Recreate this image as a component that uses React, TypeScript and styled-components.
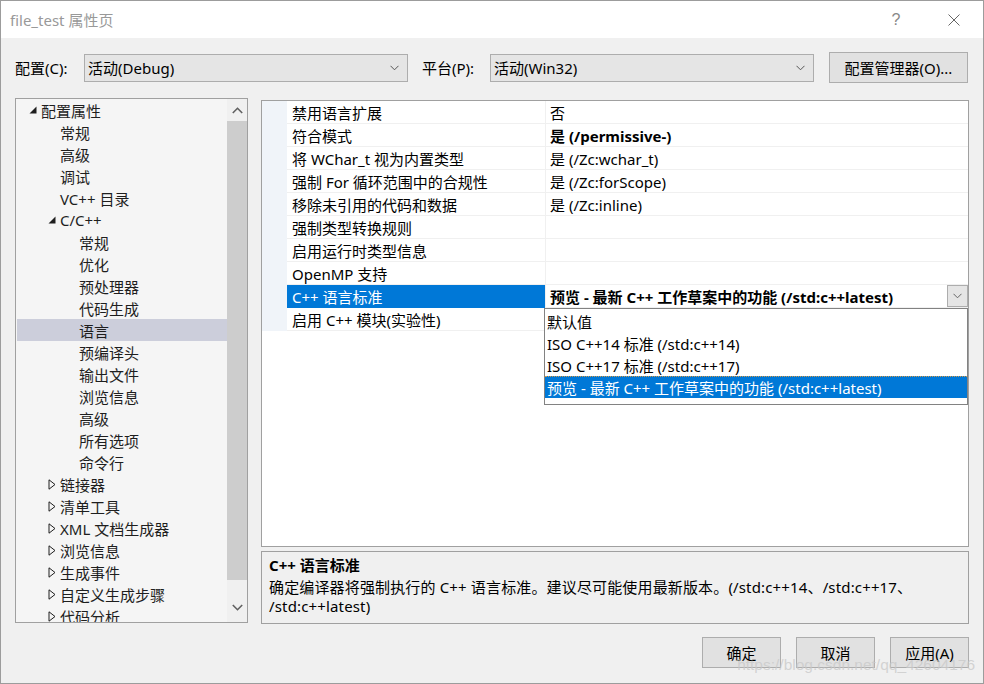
import React from "react";
import styled, { createGlobalStyle } from "styled-components";

const Global = createGlobalStyle`
  html, body { margin: 0; padding: 0; background: #f0f0f0; }
  body {
    font-family: "Noto Sans", "Noto Sans CJK SC", sans-serif;
    font-size: 15px;
    color: #000;
  }
  * { box-sizing: border-box; }
`;

const Window = styled.div`
  position: relative;
  width: 984px;
  height: 684px;
  border: 1px solid #9c9c9c;
  background: #f0f0f0;
  display: flex;
  flex-direction: column;
  overflow: hidden;
`;

const TitleBar = styled.div`
  height: 37px;
  background: #fff;
  display: flex;
  align-items: center;
  padding-left: 9px;
  color: #999;
  font-size: 15px;
`;

const TitleButtons = styled.div`
  margin-left: auto;
  display: flex;
  align-items: center;
  height: 100%;
`;

const TitleBtn = styled.div`
  width: 58px;
  height: 100%;
  display: flex;
  align-items: center;
  justify-content: center;
  color: #888;
  font-size: 16px;
  font-family: "Liberation Sans", sans-serif;
`;

const ConfigRow = styled.div`
  display: flex;
  align-items: center;
  margin-top: 14px;
  height: 31px;
  padding-left: 14px;
`;

const Label = styled.div<{ $w: number; $pl?: number }>`
  width: ${(p) => p.$w}px;
  padding-left: ${(p) => p.$pl ?? 0}px;
  flex: none;
  white-space: nowrap;
`;

const Combo = styled.div<{ $w: number }>`
  width: ${(p) => p.$w}px;
  height: 28px;
  border: 1px solid #adadad;
  background: #e5e5e5;
  display: flex;
  align-items: center;
  padding: 0 8px 0 3px;
  flex: none;
`;

const ComboText = styled.span`
  flex: 1;
`;

const Button = styled.div<{ $w: number; $ml?: number }>`
  width: ${(p) => p.$w}px;
  margin-left: ${(p) => p.$ml ?? 0}px;
  height: 31px;
  border: 1px solid #adadad;
  background: #e1e1e1;
  display: flex;
  align-items: center;
  justify-content: center;
  flex: none;
`;

const Main = styled.div`
  display: flex;
  align-items: flex-start;
  margin-top: 15px;
  padding-left: 14px;
  gap: 13px;
`;

const Tree = styled.div`
  width: 233px;
  height: 525px;
  border: 1px solid #a0a0a0;
  background: #f5f5f5;
  display: flex;
`;

const TreeList = styled.div`
  flex: 1;
  padding: 0 0 0 1px;
  overflow: hidden;
`;

const TreeRow = styled.div<{ $level: number; $sel?: boolean }>`
  height: 22px;
  display: flex;
  align-items: center;
  padding-left: ${(p) => 7 + p.$level * 19}px;
  background: ${(p) => (p.$sel ? "#cccedb" : "transparent")};
  color: #1e1e1e;
  white-space: nowrap;
`;

const Expander = styled.span`
  width: 17px;
  height: 22px;
  flex: none;
  display: flex;
  align-items: center;
  justify-content: center;
`;

const Scrollbar = styled.div`
  width: 20px;
  flex: none;
  background: #f0f0f0;
  display: flex;
  flex-direction: column;
`;

const ScrollArrow = styled.div<{ $h: number }>`
  height: ${(p) => p.$h}px;
  display: flex;
  align-items: center;
  justify-content: center;
  flex: none;
`;

const ScrollTrack = styled.div`
  flex: 1;
  display: flex;
  flex-direction: column;
`;

const Thumb = styled.div`
  height: 459px;
  background: #cdcdcd;
`;

const RightCol = styled.div`
  width: 708px;
  margin-top: 2px;
  display: flex;
  flex-direction: column;
  gap: 4px;
`;

const Grid = styled.div`
  position: relative;
  height: 447px;
  border: 1px solid #a0a0a0;
  background: #fff;
`;

const GridRow = styled.div`
  display: grid;
  grid-template-columns: 25px 258px 1fr;
  height: 23px;
`;

const Gutter = styled.div`
  background: #f0f4f9;
`;

const NameCell = styled.div<{ $sel?: boolean }>`
  display: flex;
  align-items: center;
  padding-left: 5px;
  border-bottom: 1px solid ${(p) => (p.$sel ? "#0078d7" : "#f0f0f0")};
  background: ${(p) => (p.$sel ? "#0078d7" : "#fff")};
  color: ${(p) => (p.$sel ? "#fff" : "#000")};
  white-space: nowrap;
`;

const ValueCell = styled.div<{ $bold?: boolean }>`
  display: flex;
  align-items: center;
  padding-left: 4px;
  border-left: 1px solid #f0f0f0;
  border-bottom: 1px solid #f0f0f0;
  font-weight: ${(p) => (p.$bold ? 700 : 400)};
  white-space: nowrap;
`;

const ValueText = styled.span`
  flex: 1;
`;

const DropBtn = styled.div`
  width: 21px;
  height: 22px;
  border: 1px solid #adadad;
  background: #e5e5e5;
  display: flex;
  align-items: center;
  justify-content: center;
  flex: none;
`;

const DropList = styled.div`
  position: absolute;
  left: 282px;
  top: 207px;
  width: 424px;
  height: 97px;
  border: 1px solid #828282;
  background: #fff;
  padding-top: 1px;
  z-index: 2;
`;

const DropItem = styled.div<{ $sel?: boolean }>`
  height: 22px;
  display: flex;
  align-items: center;
  padding-left: 2px;
  background: ${(p) => (p.$sel ? "#0078d7" : "#fff")};
  color: ${(p) => (p.$sel ? "#fff" : "#000")};
  border-top: 1px dotted ${(p) => (p.$sel ? "#d39a4a" : "transparent")};
  white-space: nowrap;
`;

const Desc = styled.div`
  height: 73px;
  border: 1px solid #a0a0a0;
  background: #f0f0f0;
  padding: 2px 7px 0 7px;
`;

const DescTitle = styled.div`
  font-weight: 700;
  line-height: 22px;
  margin-bottom: 2px;
`;

const DescText = styled.div`
  line-height: 19px;
  letter-spacing: 0.15px;
`;

const ButtonRow = styled.div`
  display: flex;
  justify-content: flex-end;
  gap: 15px;
  margin-top: 13px;
  padding-right: 14px;
`;

const Watermark = styled.div`
  position: absolute;
  right: 8px;
  bottom: 9px;
  font-family: "Liberation Sans", Arial, sans-serif;
  font-size: 15.5px;
  color: rgba(200, 200, 200, 0.75);
  pointer-events: none;
`;

const Chevron = ({ w = 9, color = "#555" }: { w?: number; color?: string }) => (
  <svg width={w} height={6} viewBox="0 0 9 6">
    <polyline points="0.5,0.8 4.5,4.8 8.5,0.8" fill="none" stroke={color} strokeWidth="1" />
  </svg>
);

const ChevronUp = () => (
  <svg width={11} height={7} viewBox="0 0 11 7">
    <polyline points="0.8,6 5.5,1.3 10.2,6" fill="none" stroke="#606060" strokeWidth="1.6" />
  </svg>
);

const ChevronDn = () => (
  <svg width={11} height={7} viewBox="0 0 11 7">
    <polyline points="0.8,1 5.5,5.7 10.2,1" fill="none" stroke="#606060" strokeWidth="1.6" />
  </svg>
);

const Expanded = () => (
  <svg width={8} height={8} viewBox="0 0 8 8">
    <polygon points="7.5,0.5 7.5,7.5 0.5,7.5" fill="#1e1e1e" />
  </svg>
);

const Collapsed = () => (
  <svg width={8} height={11} viewBox="0 0 8 11">
    <polygon points="1,0.8 7,5.5 1,10.2" fill="none" stroke="#1e1e1e" strokeWidth="1" />
  </svg>
);

type Node = { label: string; level: number; exp?: "open" | "closed"; sel?: boolean };

const tree: Node[] = [
  { label: "配置属性", level: 0, exp: "open" },
  { label: "常规", level: 1 },
  { label: "高级", level: 1 },
  { label: "调试", level: 1 },
  { label: "VC++ 目录", level: 1 },
  { label: "C/C++", level: 1, exp: "open" },
  { label: "常规", level: 2 },
  { label: "优化", level: 2 },
  { label: "预处理器", level: 2 },
  { label: "代码生成", level: 2 },
  { label: "语言", level: 2, sel: true },
  { label: "预编译头", level: 2 },
  { label: "输出文件", level: 2 },
  { label: "浏览信息", level: 2 },
  { label: "高级", level: 2 },
  { label: "所有选项", level: 2 },
  { label: "命令行", level: 2 },
  { label: "链接器", level: 1, exp: "closed" },
  { label: "清单工具", level: 1, exp: "closed" },
  { label: "XML 文档生成器", level: 1, exp: "closed" },
  { label: "浏览信息", level: 1, exp: "closed" },
  { label: "生成事件", level: 1, exp: "closed" },
  { label: "自定义生成步骤", level: 1, exp: "closed" },
  { label: "代码分析", level: 1, exp: "closed" },
];

type Prop = { name: string; value: string; bold?: boolean; sel?: boolean };

const props: Prop[] = [
  { name: "禁用语言扩展", value: "否" },
  { name: "符合模式", value: "是 (/permissive-)", bold: true },
  { name: "将 WChar_t 视为内置类型", value: "是 (/Zc:wchar_t)" },
  { name: "强制 For 循环范围中的合规性", value: "是 (/Zc:forScope)" },
  { name: "移除未引用的代码和数据", value: "是 (/Zc:inline)" },
  { name: "强制类型转换规则", value: "" },
  { name: "启用运行时类型信息", value: "" },
  { name: "OpenMP 支持", value: "" },
  { name: "C++ 语言标准", value: "预览 - 最新 C++ 工作草案中的功能 (/std:c++latest)", bold: true, sel: true },
  { name: "启用 C++ 模块(实验性)", value: "" },
];

const options = [
  "默认值",
  "ISO C++14 标准 (/std:c++14)",
  "ISO C++17 标准 (/std:c++17)",
  "预览 - 最新 C++ 工作草案中的功能 (/std:c++latest)",
];

export default function App() {
  return (
    <>
      <Global />
      <Window>
        <TitleBar>
          file_test 属性页
          <TitleButtons>
            <TitleBtn>?</TitleBtn>
            <TitleBtn>
              <svg width={12} height={12} viewBox="0 0 12 12">
                <path d="M0.5 0.5 L11.5 11.5 M11.5 0.5 L0.5 11.5" stroke="#666" strokeWidth="1" />
              </svg>
            </TitleBtn>
          </TitleButtons>
        </TitleBar>

        <ConfigRow>
          <Label $w={69}>配置(C):</Label>
          <Combo $w={324}>
            <ComboText>活动(Debug)</ComboText>
            <Chevron />
          </Combo>
          <Label $w={82} $pl={14}>平台(P):</Label>
          <Combo $w={324}>
            <ComboText>活动(Win32)</ComboText>
            <Chevron />
          </Combo>
          <Button $w={139} $ml={15}>配置管理器(O)...</Button>
        </ConfigRow>

        <Main>
          <Tree>
            <TreeList>
              {tree.map((n, i) => (
                <TreeRow key={i} $level={n.level} $sel={n.sel}>
                  <Expander>
                    {n.exp === "open" && <Expanded />}
                    {n.exp === "closed" && <Collapsed />}
                  </Expander>
                  {n.label}
                </TreeRow>
              ))}
            </TreeList>
            <Scrollbar>
              <ScrollArrow $h={22}>
                <ChevronUp />
              </ScrollArrow>
              <ScrollTrack>
                <Thumb />
              </ScrollTrack>
              <ScrollArrow $h={30}>
                <ChevronDn />
              </ScrollArrow>
            </Scrollbar>
          </Tree>

          <RightCol>
            <Grid>
              {props.map((p, i) => (
                <GridRow key={i}>
                  <Gutter />
                  <NameCell $sel={p.sel}>{p.name}</NameCell>
                  <ValueCell $bold={p.bold}>
                    <ValueText>{p.value}</ValueText>
                    {p.sel && (
                      <DropBtn>
                        <Chevron w={9} color="#666" />
                      </DropBtn>
                    )}
                  </ValueCell>
                </GridRow>
              ))}
              <DropList>
                {options.map((o, i) => (
                  <DropItem key={i} $sel={i === options.length - 1}>
                    {o}
                  </DropItem>
                ))}
              </DropList>
            </Grid>
            <Desc>
              <DescTitle>C++ 语言标准</DescTitle>
              <DescText>
                确定编译器将强制执行的 C++ 语言标准。建议尽可能使用最新版本。(/std:c++14、/std:c++17、
              </DescText>
              <DescText>/std:c++latest)</DescText>
            </Desc>
          </RightCol>
        </Main>

        <ButtonRow>
          <Button $w={79}>确定</Button>
          <Button $w={79}>取消</Button>
          <Button $w={79}>应用(A)</Button>
        </ButtonRow>

        <Watermark>https://blog.csdn.net/qq_42604176</Watermark>
      </Window>
    </>
  );
}
